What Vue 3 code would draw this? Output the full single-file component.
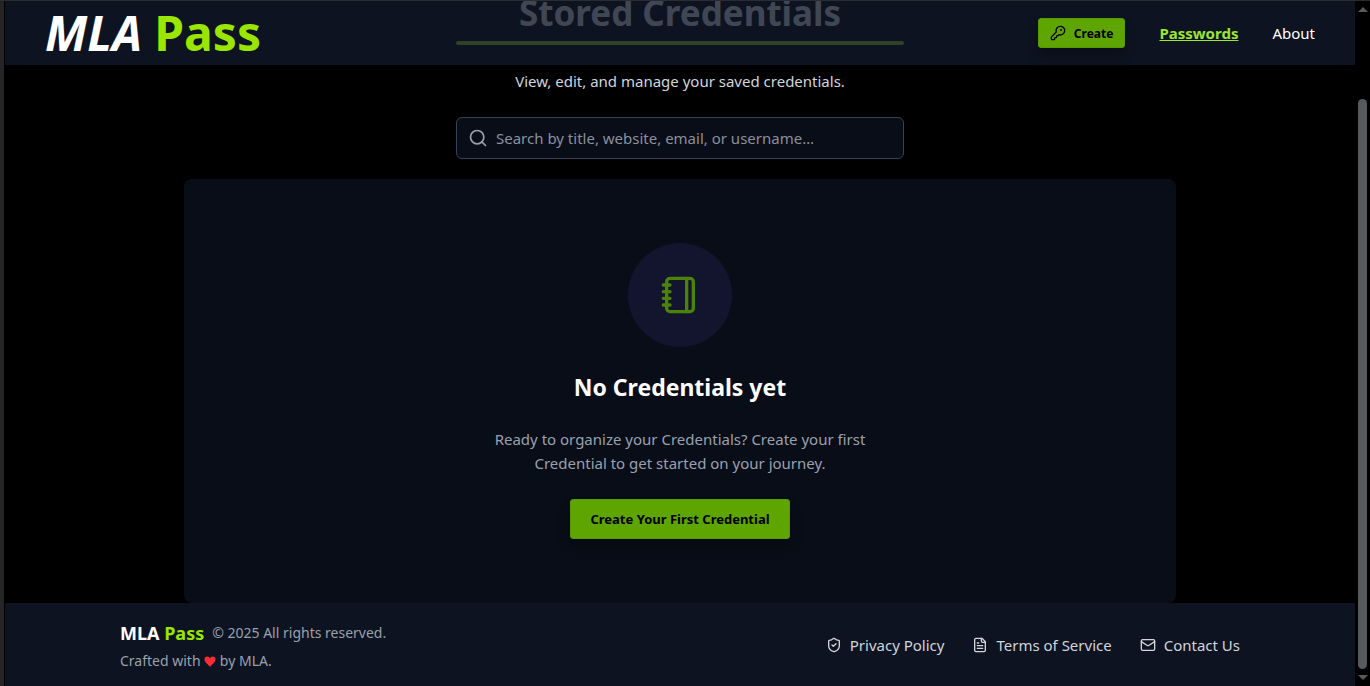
<script setup>
import { ref } from 'vue'

const query = ref('')

const footerLinks = [
  { id: 'privacy', label: 'Privacy Policy' },
  { id: 'terms', label: 'Terms of Service' },
  { id: 'contact', label: 'Contact Us' },
]
</script>

<template>
  <div class="window">
    <div class="edge"></div>
    <div class="page">
      <header class="topbar">
        <a class="logo" href="#"><em>MLA</em><span class="lime">Pass</span></a>
        <nav class="nav">
          <button class="btn btn-small" type="button">
            <svg class="icon-16" viewBox="0 0 24 24" aria-hidden="true">
              <path d="M2.586 17.414A2 2 0 0 0 2 18.828V21a1 1 0 0 0 1 1h3a1 1 0 0 0 1-1v-1a1 1 0 0 1 1-1h1a1 1 0 0 0 1-1v-1a1 1 0 0 1 1-1h.172a2 2 0 0 0 1.414-.586l.814-.814a6.5 6.5 0 1 0-4-4z" />
              <circle cx="16.5" cy="7.5" r=".5" fill="currentColor" />
            </svg>
            Create
          </button>
          <a class="nav-link active" href="#passwords">Passwords</a>
          <a class="nav-link" href="#about">About</a>
        </nav>
      </header>

      <main class="main">
        <div class="intro">
          <h1>Stored Credentials</h1>
          <div class="rule"></div>
          <p>View, edit, and manage your saved credentials.</p>
        </div>

        <label class="search">
          <svg class="icon-20" viewBox="0 0 24 24" aria-hidden="true">
            <circle cx="11" cy="11" r="8" />
            <path d="m21 21-4.300-4.300" />
          </svg>
          <input
            v-model="query"
            type="text"
            aria-label="Search credentials"
            placeholder="Search by title, website, email, or username…"
          />
        </label>

        <section class="card">
          <div class="badge">
            <svg class="icon-40" viewBox="0 0 24 24" aria-hidden="true">
              <path d="M2 6h4M2 10h4M2 14h4M2 18h4" />
              <rect x="4" y="2" width="16" height="20" rx="2" />
              <path d="M16 2v20" />
            </svg>
          </div>
          <h2>No Credentials yet</h2>
          <p>Ready to organize your Credentials? Create your first Credential to get started on your journey.</p>
          <button class="btn btn-large" type="button">Create Your First Credential</button>
        </section>
      </main>

      <footer class="footer">
        <div class="footer-inner">
          <div class="about">
            <div class="brand-row">
              <strong class="brand">MLA <span class="lime">Pass</span></strong>
              <span>© 2025 All rights reserved.</span>
            </div>
            <div class="crafted">
              Crafted with
              <svg class="heart" viewBox="0 0 12 11" aria-label="love" role="img">
                <path d="M6 11C4.500 8.600.500 6.500.500 3.300.500 1.500 1.700.500 3.200.500 4.500.500 5.500 1.300 6 2.500 6.500 1.300 7.500.500 8.800.500c1.500 0 2.700 1 2.700 2.800C11.500 6.500 7.500 8.600 6 11z" />
              </svg>
              by MLA.
            </div>
          </div>
          <nav class="links">
            <a v-for="link in footerLinks" :key="link.id" :href="'#' + link.id">
              <svg class="icon-16" viewBox="0 0 24 24" aria-hidden="true">
                <template v-if="link.id === 'privacy'">
                  <path d="M20 13c0 5-3.500 7.500-7.660 8.950a1 1 0 0 1-.67-.01C7.500 20.500 4 18 4 13V6a1 1 0 0 1 1-1c2 0 4.500-1.200 6.240-2.720a1.170 1.170 0 0 1 1.520 0C14.510 3.810 17 5 19 5a1 1 0 0 1 1 1z" />
                  <path d="m9 12 2 2 4-4" />
                </template>
                <template v-else-if="link.id === 'terms'">
                  <path d="M15 2H6a2 2 0 0 0-2 2v16a2 2 0 0 0 2 2h12a2 2 0 0 0 2-2V7z" />
                  <path d="M14 2v4a2 2 0 0 0 2 2h4M10 9H8M16 13H8M16 17H8" />
                </template>
                <template v-else>
                  <rect x="2" y="4" width="20" height="16" rx="2" />
                  <path d="m22 7-8.970 5.700a1.940 1.940 0 0 1-2.060 0L2 7" />
                </template>
              </svg>
              {{ link.label }}
            </a>
          </nav>
        </div>
      </footer>
    </div>

    <div class="scrollbar" aria-hidden="true">
      <span class="arrow up"></span>
      <span class="thumb"></span>
      <span class="arrow down"></span>
    </div>
  </div>
</template>

<style>
body {
  margin: 0;
  background: #000;
}
</style>

<style scoped>
* {
  box-sizing: border-box;
}
.window {
  display: flex;
  height: 100vh;
  overflow: hidden;
  border-top: 1px solid #2b2b30;
  background: #000;
  color: #fff;
  font-family: "Noto Sans", "Open Sans", sans-serif;
  font-size: 15px;
  line-height: 24px;
}
.edge {
  flex: none;
  width: 5px;
  background: #252525;
  border-right: 1px solid #000;
}
.page {
  position: relative;
  flex: 1;
  min-width: 0;
  overflow: hidden;
}
h1, h2, p {
  margin: 0;
}
a {
  color: inherit;
  text-decoration: none;
}
svg {
  flex: none;
  fill: none;
  stroke: currentColor;
  stroke-width: 2;
  stroke-linecap: round;
  stroke-linejoin: round;
}
.icon-16 {
  width: 16px;
  height: 16px;
}
.icon-20 {
  width: 20px;
  height: 20px;
}
.icon-40 {
  width: 40px;
  height: 40px;
}
.lime {
  color: #9ae600;
}

.topbar {
  position: absolute;
  inset: 0 0 auto;
  z-index: 1;
  display: flex;
  align-items: center;
  justify-content: space-between;
  height: 64px;
  padding: 0 40px;
  background: rgba(16, 24, 40, 0.8);
}
.logo {
  display: flex;
  gap: 12px;
  font-size: 48px;
  font-weight: 700;
  line-height: 64px;
}
.nav {
  display: flex;
  align-items: center;
  gap: 34px;
}
.nav-link.active {
  color: #9ae630;
  font-weight: 700;
  text-decoration: underline;
}
.btn {
  display: flex;
  align-items: center;
  justify-content: center;
  border: 1px solid #579a00;
  border-radius: 3px;
  background: #5ea500;
  color: #000;
  font-family: inherit;
  font-weight: 700;
  box-shadow: 0 8px 12px rgba(0, 0, 0, 0.25);
}
.btn-small {
  gap: 8px;
  height: 30px;
  padding: 0 11px;
  font-size: 12px;
}
.btn-large {
  height: 40px;
  margin-top: 24px;
  padding: 0 19px;
  font-size: 13px;
}

.main {
  display: flex;
  flex-direction: column;
  align-items: center;
  margin-top: -8px;
  padding: 0 16px;
}
.intro {
  width: 100%;
  max-width: 448px;
  text-align: center;
}
h1 {
  font-size: 35px;
  line-height: 40px;
}
.rule {
  height: 4px;
  margin: 8px 0 24px;
  border-radius: 2px;
  background: #a0eb20;
}
.intro p {
  color: #d1d5dc;
}
.search {
  display: flex;
  align-items: center;
  gap: 8px;
  width: 100%;
  max-width: 448px;
  height: 42px;
  margin: 24px 0 20px;
  padding: 0 11px;
  border: 1px solid #364153;
  border-radius: 6px;
  background: #090d17;
  color: #99a1af;
}
.search input {
  flex: 1;
  min-width: 0;
  padding: 0;
  border: 0;
  outline: 0;
  background: transparent;
  color: #fff;
  font: inherit;
}
.search input::placeholder {
  color: #8a909d;
  opacity: 1;
}
.card {
  display: flex;
  flex-direction: column;
  align-items: center;
  width: 100%;
  max-width: 992px;
  padding: 64px 16px;
  border-radius: 8px;
  background: #090d17;
  text-align: center;
}
.badge {
  display: grid;
  place-items: center;
  width: 104px;
  height: 104px;
  border-radius: 50%;
  background: #13152e;
  color: #4b8208;
}
h2 {
  margin: 24px 0;
  font-size: 23px;
  line-height: 32px;
}
.card p {
  max-width: 400px;
  color: #99a1af;
}

.footer {
  padding: 16px 40px;
  background: #0d1320;
}
.footer-inner {
  display: flex;
  align-items: center;
  justify-content: space-between;
  max-width: 1120px;
  margin: 0 auto;
}
.about {
  display: grid;
  gap: 4px;
  color: #99a1af;
  font-size: 14px;
  line-height: 20px;
}
.brand-row {
  display: flex;
  align-items: center;
  gap: 8px;
}
.brand {
  color: #fff;
  font-size: 18px;
  line-height: 28px;
}
.heart {
  width: 12px;
  height: 11px;
  vertical-align: -1px;
  fill: #fb2c36;
  stroke: none;
}
.links {
  display: flex;
  gap: 28px;
  color: #d1d5dc;
}
.links a {
  display: flex;
  align-items: center;
  gap: 8px;
}

.scrollbar {
  display: flex;
  flex: none;
  flex-direction: column;
  align-items: center;
  width: 15px;
  padding: 6px 0;
  background: #000;
}
.thumb {
  flex: 1;
  width: 9px;
  margin: 87px 0 6px;
  border-radius: 5px;
  background: #565a5c;
}
.arrow {
  border: 0 solid transparent;
  border-width: 0 5px;
}
.up {
  border-bottom: 5px solid #565a5c;
}
.down {
  border-top: 5px solid #565a5c;
}
</style>
